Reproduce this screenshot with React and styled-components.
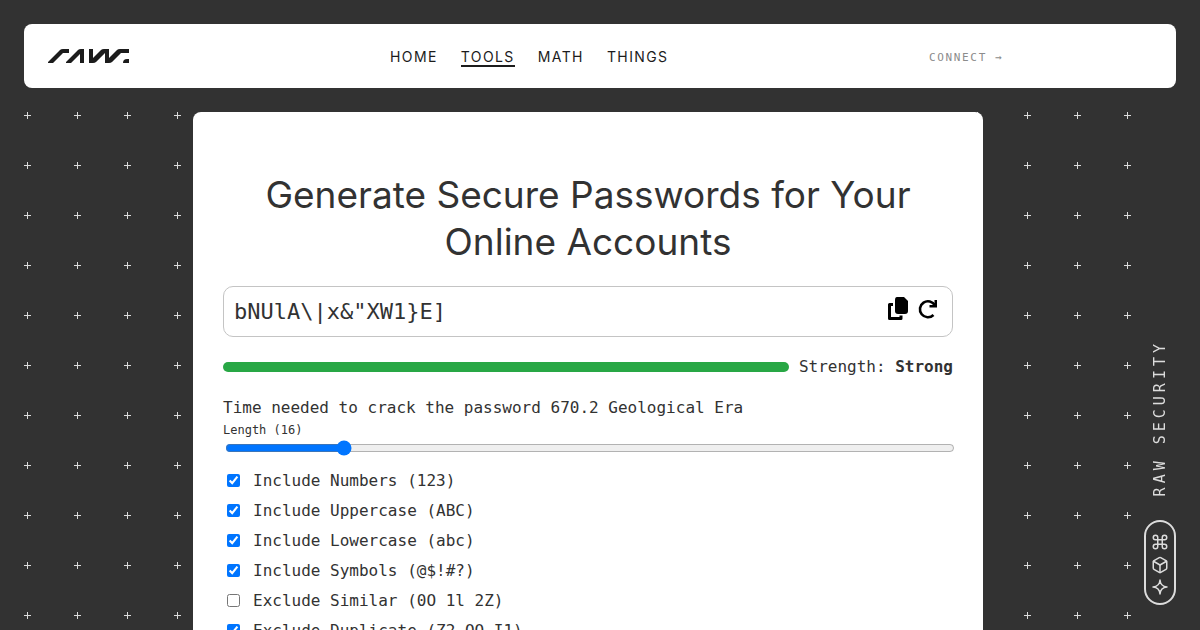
import React, { useState } from "react";
import styled, { createGlobalStyle } from "styled-components";
import { LuBox, LuCommand } from "react-icons/lu";

const plus = encodeURIComponent(
  '<svg xmlns="http://www.w3.org/2000/svg" width="50" height="50"><path d="M0 3.5h7M3.5 0v7" stroke="#dcdcdc" fill="none"/></svg>'
);

const GlobalStyle = createGlobalStyle`
  *, *::before, *::after {
    box-sizing: border-box;
  }
  body {
    margin: 0;
    height: 100vh;
    overflow: hidden;
    background: #323232;
    color: #323232;
    font: 16px/24px "DejaVu Sans Mono", monospace;
  }
`;

const Page = styled.div`
  display: flex;
  flex-direction: column;
  gap: 24px;
  height: 100vh;
  padding: 24px 24px 0;
`;

const Header = styled.header`
  display: grid;
  grid-template-columns: 342px 1fr 223px;
  align-items: center;
  flex: none;
  height: 64px;
  padding: 0 24px;
  border-radius: 8px;
  background: #fff;
`;

const Logo = styled.a`
  display: flex;
  color: #1c1c1c;
`;

const Nav = styled.nav`
  display: flex;
  gap: 23px;
`;

const NavLink = styled.a`
  padding-top: 3px;
  border-bottom: 2px solid ${(p) => (p.$active ? "#1c1c1c" : "transparent")};
  color: #1c1c1c;
  font: 400 14px/17px Inter, sans-serif;
  letter-spacing: 0.1em;
  text-decoration: none;
`;

const Connect = styled.a`
  padding-top: 3px;
  color: #8c8c8c;
  font-size: 11px;
  letter-spacing: 0.15em;
  text-decoration: none;
`;

const Main = styled.main`
  flex: 1;
  min-height: 0;
  margin-right: 24px;
  overflow: hidden;
  background: url("data:image/svg+xml,${plus}");
`;

const Card = styled.section`
  max-width: 790px;
  margin: 0 auto;
  padding: 59px 30px;
  border-radius: 8px 8px 0 0;
  background: #fff;
`;

const Title = styled.h1`
  margin: 0 0 21px;
  font: 400 37px/47px Inter, sans-serif;
  text-align: center;
`;

const Field = styled.div`
  display: flex;
  align-items: center;
  gap: 6px;
  height: 51px;
  padding: 0 12px 0 10px;
  border: 1px solid #c4c4c4;
  border-radius: 10px;
`;

const Password = styled.input`
  flex: 1;
  min-width: 0;
  padding: 0;
  border: 0;
  outline: 0;
  background: none;
  color: inherit;
  font: inherit;
  font-size: 22px;
`;

const IconButton = styled.button`
  display: flex;
  padding: 0 0 6px;
  border: 0;
  background: none;
  color: #000;
  cursor: pointer;
`;

const Strength = styled.div`
  display: flex;
  align-items: center;
  gap: 10px;
  margin-top: 18px;
`;

const Meter = styled.div`
  flex: 1;
  height: 10px;
  border-radius: 5px;
  background: #28a745;
`;

const CrackTime = styled.p`
  margin: 17px 0 0;
`;

const LengthLabel = styled.label`
  display: block;
  font-size: 12px;
  line-height: 20px;
`;

const Slider = styled.input`
  display: block;
  width: 100%;
  height: 16px;
  margin: 0 2px 10px;
`;

const Option = styled.label`
  display: flex;
  align-items: center;
  gap: 10px;
  height: 30px;
`;

const Checkbox = styled.input`
  width: 13px;
  height: 13px;
  margin: 3px 3px 4px 4px;
`;

const Side = styled.aside`
  position: fixed;
  right: 24px;
  bottom: 25px;
  display: flex;
  flex-direction: column;
  align-items: center;
  gap: 24px;
  color: #dcdcdc;
`;

const SideText = styled.span`
  writing-mode: vertical-rl;
  transform: rotate(180deg);
  font-size: 15px;
  line-height: 20px;
  letter-spacing: 4px;
`;

const Pill = styled.div`
  display: flex;
  flex-direction: column;
  align-items: center;
  justify-content: center;
  gap: 5px;
  width: 32px;
  height: 85px;
  padding-top: 2px;
  border: 2px solid;
  border-radius: 16px;
`;

const options = [
  ["Include Numbers (123)", true],
  ["Include Uppercase (ABC)", true],
  ["Include Lowercase (abc)", true],
  ["Include Symbols (@$!#?)", true],
  ["Exclude Similar (0O 1l 2Z)", false],
  ["Exclude Duplicate (Z2 OO I1)", true],
];

const App = () => {
  const [length, setLength] = useState(16);

  return (
    <>
      <GlobalStyle />
      <Page>
        <Header>
          <Logo href="#home" aria-label="raw.">
            <svg width="82" height="16" viewBox="0 0 82 16" fill="currentColor">
              <path d="M0 15V14L12 2Q13 1 15 1H21V5H15L5 15Z" />
              <path d="M18 15V14L30 2Q31 1 33 1H36V15H32V6L23 15Z" />
              <path d="M41 1H45V10L53 2Q54 1 56 1H61V10L69 2Q70 1 72 1H81V5H73L64 14Q63 15 61 15H57V5L48 14Q47 15 45 15H41Z" />
              <path d="M75 15Q75 11 79 11H81V15Z" />
            </svg>
          </Logo>
          <Nav>
            <NavLink href="#home">HOME</NavLink>
            <NavLink href="#tools" $active>
              TOOLS
            </NavLink>
            <NavLink href="#math">MATH</NavLink>
            <NavLink href="#things">THINGS</NavLink>
          </Nav>
          <Connect href="#connect">CONNECT →</Connect>
        </Header>
        <Main>
          <Card>
            <Title>Generate Secure Passwords for Your Online Accounts</Title>
            <Field>
              <Password
                aria-label="Password"
                readOnly
                value={'bNUlA\\|x&"XW1}E]'}
              />
              <IconButton aria-label="Copy">
                <svg width="24" height="24" viewBox="0 0 24 24">
                  <path d="M11 0H18L22 4V14Q22 17 19 17H12Q9 17 9 14V3Q9 0 11 0Z" />
                  <path
                    d="M7 7.500H3.500V21.500H15V18.500"
                    fill="none"
                    stroke="#000"
                    strokeWidth="3"
                    strokeLinejoin="round"
                  />
                </svg>
              </IconButton>
              <IconButton aria-label="Regenerate">
                <svg width="24" height="24" viewBox="0 0 24 24">
                  <path
                    d="M19 8.500A8 8 0 1 0 17.500 18"
                    fill="none"
                    stroke="#000"
                    strokeWidth="2.6"
                  />
                  <path d="M18.500 3H21V10.500H13.500V8H16.500L18.500 6Z" />
                </svg>
              </IconButton>
            </Field>
            <Strength>
              <Meter />
              <span>
                Strength: <strong>Strong</strong>
              </span>
            </Strength>
            <CrackTime>
              Time needed to crack the password 670.2 Geological Era
            </CrackTime>
            <LengthLabel htmlFor="length">Length ({length})</LengthLabel>
            <Slider
              id="length"
              type="range"
              min="5"
              max="76"
              value={length}
              onChange={(e) => setLength(e.target.value)}
            />
            {options.map(([label, checked]) => (
              <Option key={label}>
                <Checkbox type="checkbox" defaultChecked={checked} />
                {label}
              </Option>
            ))}
          </Card>
        </Main>
      </Page>
      <Side>
        <SideText>RAW SECURITY</SideText>
        <Pill>
          <LuCommand size={18} />
          <LuBox size={18} />
          <svg
            width="16"
            height="16"
            viewBox="0 0 16 16"
            fill="none"
            stroke="currentColor"
            strokeWidth="1.5"
            strokeLinejoin="round"
          >
            <path d="M8 1Q8.500 7.500 15 8Q8.500 8.500 8 15Q7.500 8.500 1 8Q7.500 7.500 8 1Z" />
          </svg>
        </Pill>
      </Side>
    </>
  );
};

export default App;
